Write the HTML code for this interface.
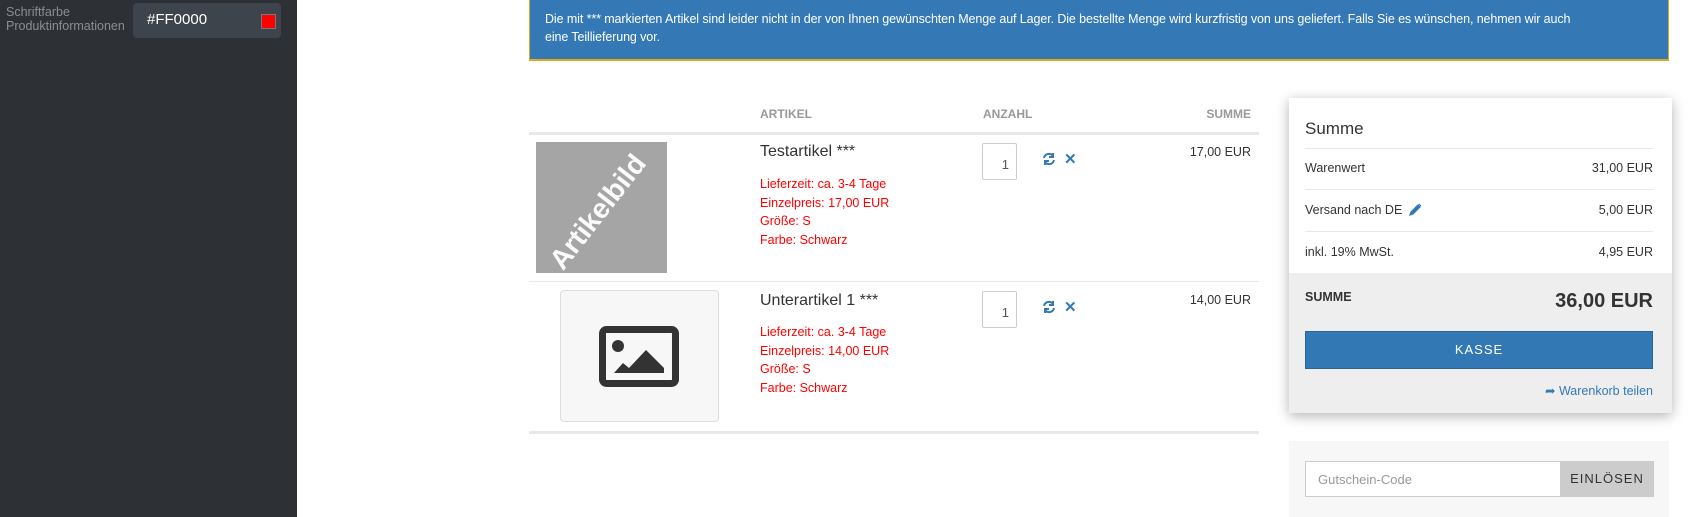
<!DOCTYPE html>
<html><head><meta charset="utf-8"><style>
*{margin:0;padding:0;box-sizing:border-box}
body{width:1690px;height:517px;overflow:hidden;background:#fff;font-family:"Liberation Sans",Arial,sans-serif;position:relative;color:#333}
.a{position:absolute;white-space:nowrap}
.red{color:#f00;font-size:12.5px;line-height:18.5px}
.hd{color:#999;font-weight:bold;font-size:12px}
.qty{position:absolute;width:35px;height:37px;border:1px solid #ccc;border-radius:2px;font-size:13px;text-align:right;padding:13px 7px 0 0;color:#555}
.r{text-align:right;font-size:12.5px}
.line{position:absolute;background:#e8e8e8}
</style></head><body>
<!-- sidebar -->
<div class="a" style="left:0;top:0;width:297px;height:517px;background:#2d3135"></div>
<div class="a" style="left:6px;top:5px;color:#8b8e91;font-size:12.5px;line-height:14px">Schriftfarbe<br>Produktinformationen</div>
<div class="a" style="left:133px;top:3px;width:148px;height:35px;background:#3e444b;border-radius:4px"></div>
<div class="a" style="left:147px;top:11px;color:#fff;font-size:15px">#FF0000</div>
<div class="a" style="left:261px;top:14px;width:15px;height:15px;background:#f00;border:1px solid #777"></div>

<!-- banner -->
<div class="a" style="left:529px;top:0;width:1140px;height:61px;background:#3479b5;border:1px solid #e6a817;border-top:none;border-bottom:2px solid #e6a817"></div>
<div class="a" style="left:545px;top:10px;color:#fff;font-size:12.5px;line-height:18px;letter-spacing:-0.1px">Die mit *** markierten Artikel sind leider nicht in der von Ihnen gewünschten Menge auf Lager. Die bestellte Menge wird kurzfristig von uns geliefert. Falls Sie es wünschen, nehmen wir auch<br>eine Teillieferung vor.</div>

<!-- table -->
<div class="a hd" style="left:760px;top:107px">ARTIKEL</div>
<div class="a hd" style="left:983px;top:107px">ANZAHL</div>
<div class="a hd" style="left:1190px;top:107px;width:61px;text-align:right">SUMME</div>
<div class="line" style="left:529px;top:132px;width:730px;height:3px"></div>

<div class="a" style="left:536px;top:142px;width:131px;height:131px;background:#a5a5a5;overflow:hidden">
<div class="a" style="left:-18px;top:54px;width:160px;text-align:center;transform:rotate(-52deg);color:#fff;font-weight:bold;font-size:28px;opacity:.95">Artikelbild</div></div>
<div class="a" style="left:760px;top:143px;font-size:16px;color:#333">Testartikel ***</div>
<div class="a red" style="left:760px;top:175px">Lieferzeit: ca. 3-4 Tage<br>Einzelpreis: 17,00 EUR<br>Größe: S<br>Farbe: Schwarz</div>
<div class="qty" style="left:982px;top:143px">1</div>
<svg class="a" style="left:1042px;top:152px" width="14" height="14" viewBox="0 0 14 14"><path d="M2 6 A5 5 0 0 1 11 4 M11 1 V5 H7 M12 8 A5 5 0 0 1 3 10 M3 13 V9 H7" fill="none" stroke="#3479b5" stroke-width="2"/></svg>
<div class="a" style="left:1064px;top:150px;color:#3479b5;font-weight:bold;font-size:15px">✕</div>
<div class="a r" style="left:1150px;top:145px;width:101px">17,00 EUR</div>
<div class="line" style="left:529px;top:281px;width:730px;height:1px"></div>

<div class="a" style="left:560px;top:290px;width:159px;height:132px;background:#f7f7f7;border:1px solid #ddd;border-radius:4px"></div>
<svg class="a" style="left:599px;top:326px" width="80" height="61" viewBox="0 0 80 61"><rect x="3.5" y="3.5" width="73" height="54" rx="4" fill="none" stroke="#333" stroke-width="7"/><circle cx="19" cy="20" r="6" fill="#333"/><path d="M15 47 L24 37 L30 42 L47 24 L65 42 V47 Z" fill="#333"/></svg>
<div class="a" style="left:760px;top:292px;font-size:16px;color:#333">Unterartikel 1 ***</div>
<div class="a red" style="left:760px;top:323px">Lieferzeit: ca. 3-4 Tage<br>Einzelpreis: 14,00 EUR<br>Größe: S<br>Farbe: Schwarz</div>
<div class="qty" style="left:982px;top:291px">1</div>
<svg class="a" style="left:1042px;top:300px" width="14" height="14" viewBox="0 0 14 14"><path d="M2 6 A5 5 0 0 1 11 4 M11 1 V5 H7 M12 8 A5 5 0 0 1 3 10 M3 13 V9 H7" fill="none" stroke="#3479b5" stroke-width="2"/></svg>
<div class="a" style="left:1064px;top:298px;color:#3479b5;font-weight:bold;font-size:15px">✕</div>
<div class="a r" style="left:1150px;top:293px;width:101px">14,00 EUR</div>
<div class="line" style="left:529px;top:431px;width:730px;height:3px"></div>

<!-- summary -->
<div class="a" style="left:1289px;top:98px;width:383px;height:315px;background:#eee;box-shadow:0 3px 12px rgba(0,0,0,.3)"></div>
<div class="a" style="left:1289px;top:98px;width:383px;height:175px;background:#fff"></div>
<div class="a" style="left:1305px;top:119px;font-size:17px;color:#333">Summe</div>
<div class="line" style="left:1305px;top:148px;width:348px;height:1px"></div>
<div class="a" style="left:1305px;top:161px;font-size:12.5px">Warenwert</div>
<div class="a r" style="left:1550px;top:161px;width:103px">31,00 EUR</div>
<div class="line" style="left:1305px;top:189px;width:348px;height:1px"></div>
<div class="a" style="left:1305px;top:203px;font-size:12.5px">Versand nach DE</div>
<svg class="a" style="left:1409px;top:203px" width="13" height="13" viewBox="0 0 13 13"><path d="M1 12 L2 9 L9 2 L11 4 L4 11 Z M10 1 L12 3" fill="#3479b5" stroke="#3479b5" stroke-width="1.2"/></svg>
<div class="a r" style="left:1550px;top:203px;width:103px">5,00 EUR</div>
<div class="line" style="left:1305px;top:231px;width:348px;height:1px"></div>
<div class="a" style="left:1305px;top:245px;font-size:12.5px">inkl. 19% MwSt.</div>
<div class="a r" style="left:1550px;top:245px;width:103px">4,95 EUR</div>
<div class="a" style="left:1305px;top:290px;font-size:12.5px;font-weight:bold">SUMME</div>
<div class="a" style="left:1500px;top:290px;width:153px;text-align:right;font-size:20px;font-weight:bold;color:#333">36,00 EUR</div>
<div class="a" style="left:1305px;top:331px;width:348px;height:38px;background:#3278b4;border:1px solid #2a659a;color:#fff;font-size:13px;letter-spacing:1px;text-align:center;line-height:36px">KASSE</div>
<div class="a" style="left:1500px;top:383px;width:153px;text-align:right;color:#3479b5;font-size:12.5px">➦ Warenkorb teilen</div>

<!-- coupon -->
<div class="a" style="left:1289px;top:441px;width:380px;height:76px;background:#f7f7f7"></div>
<div class="a" style="left:1305px;top:461px;width:256px;height:36px;background:#fff;border:1px solid #ccc;color:#999;font-size:13px;padding:10px 12px">Gutschein-Code</div>
<div class="a" style="left:1560px;top:461px;width:94px;height:36px;background:#ccc;color:#333;font-size:13px;letter-spacing:1px;text-align:center;line-height:36px">EINLÖSEN</div>
</body></html>
